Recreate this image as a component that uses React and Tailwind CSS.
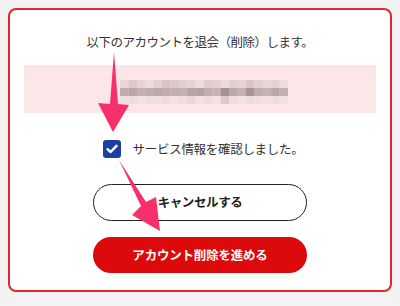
import React from "react";

const mosaic = [
  ["#e9d6d9","#dcc8cb","#e6d3d6","#eddadd","#e3d0d3","#d8c4c7","#dcc8cb","#e2cfd2","#e6d3d6","#eedcdf","#e1cdd0","#e3d0d3","#ecdadd","#e2cfd2","#e6d3d6","#dac6c9","#e3d0d3","#e9d6d9","#e5d2d5","#eedcdf"],
  ["#bfacae","#b9a6a8","#c3b0b2","#c0adaf","#bca9ab","#bfacae","#c2afb1","#c5b2b4","#b7a4a6","#b4a1a3","#c1aeb0","#c6b3b5","#a39193","#bba8aa","#c4b1b3","#a79597","#bfacae","#c6b3b5","#b9a6a8","#c3b0b2"],
  ["#f1e0e2","#eddcde","#f3e2e4","#efdee0","#f0dfe1","#eddcde","#f3e2e4","#efdee0","#e8d6d8","#f1e0e2","#eddcde","#f3e2e4","#dccacc","#efdee0","#f3e2e4","#eddcde","#efdee0","#f3e2e4","#eddcde","#f1e0e2"],
];

export default function App() {
  return (
    <div
      className="relative w-[400px] h-[306px] bg-[#f3f3f3] pt-2 px-2"
      style={{ fontFamily: '"Noto Sans CJK JP", "Noto Sans", sans-serif' }}
    >
      <div className="h-[284px] border-2 border-[#e1262d] rounded-[8px] bg-white px-[14px] pt-[22px] flex flex-col items-center">
        <p className="text-[12.5px] leading-[20px] text-[#333333] tracking-[-0.5px]">
          以下のアカウントを退会（削除）します。
        </p>
        <div className="mt-[13px] w-full h-[48px] bg-[#fde6e8] flex items-center pl-[96px] pt-[6px]">
          <svg width="168" height="24" viewBox="0 0 168 24">
            {mosaic.map((row, r) =>
              row.map((c, i) => (
                <rect key={r + "-" + i} x={i * 8.4} y={r * 8} width="8.6" height="8" fill={c} />
              ))
            )}
          </svg>
        </div>
        <div className="mt-[26px] ml-[6px] flex items-center gap-[12px] h-[20px]">
          <span className="w-[18px] h-[18px] rounded-[3px] bg-[#1b3fa3] flex items-center justify-center">
            <svg width="12" height="10" viewBox="0 0 12 10">
              <path d="M1.5 5.2 L4.6 8 L10.5 1.8" fill="none" stroke="white" strokeWidth="2.4" strokeLinecap="round" strokeLinejoin="round" />
            </svg>
          </span>
          <span className="text-[12.5px] leading-[20px] text-[#333333] tracking-[-0.3px]">
            サービス情報を確認しました。
          </span>
        </div>
        <button className="mt-[25px] w-[214px] h-[37px] rounded-full border-[1.5px] border-[#222222] bg-white text-[12.5px] font-bold text-[#222222] tracking-[-0.4px]">
          キャンセルする
        </button>
        <button className="mt-[16px] w-[214px] h-[36px] rounded-full bg-[#dc0a0b] text-[12.5px] font-bold text-white tracking-[-0.2px]">
          アカウント削除を進める
        </button>
      </div>
      <svg className="absolute left-0 top-0 pointer-events-none" width="400" height="306" viewBox="0 0 400 306">
        <polygon points="114,52 118,104 129,105 113,132 98,103 110,104" fill="#f72f6b" />
        <polygon points="119,160 146,202 156,197 160,231 132,215 141,206" fill="#f72f6b" />
      </svg>
    </div>
  );
}
